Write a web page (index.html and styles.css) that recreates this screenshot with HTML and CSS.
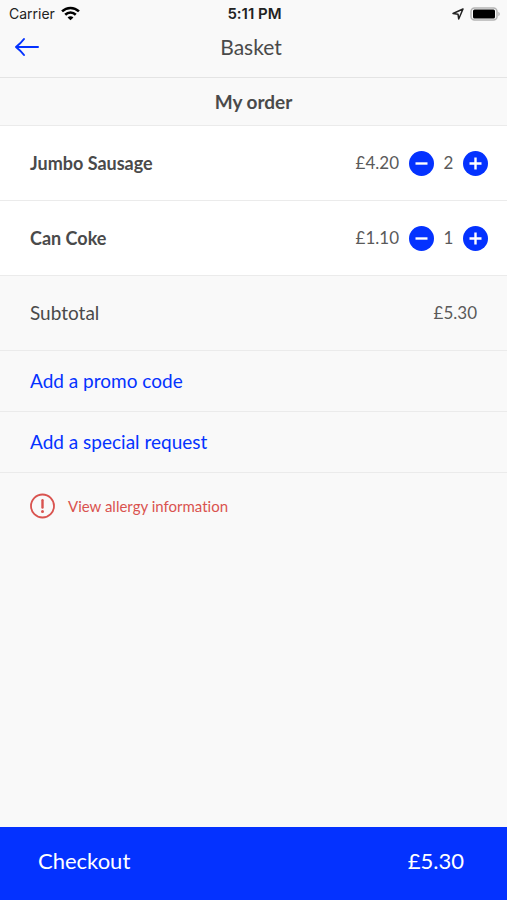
FILE: index.html
```html
<!DOCTYPE html>
<html lang="en">
<head>
<meta charset="UTF-8">
<meta name="viewport" content="width=device-width, initial-scale=1.0">
<title>Basket</title>

<link rel="stylesheet" href="styles.css">
</head>

<body>

<div class="status-bar">
<div class="status-left">
<span>Carrier</span>
<svg width="19" height="15" viewBox="0 0 18 14" fill="none" stroke="#000" stroke-width="2.4" aria-hidden="true">
<path d="M1 5C5.5 .6 12.5 .6 17 5"/>
<path d="M4 8.200C6.800 5.400 11.200 5.400 14 8.200"/>
<path d="M9 13.5L6.200 10.700C7.800 9.200 10.200 9.200 11.800 10.700Z" fill="#000" stroke="none"/>
</svg>
</div>
<span class="status-time">5:11 PM</span>
<div class="status-right">
<svg width="12" height="12" viewBox="0 0 12 12" fill="none" stroke="#222" stroke-width="1.5" stroke-linejoin="round" aria-hidden="true">
<path d="M11 1L1 5.5L6 6.2L6.700 11Z"/>
</svg>
<svg width="30" height="14" viewBox="0 0 30 14" aria-hidden="true">
<rect x="1" y="1" width="26" height="12" rx="3.5" fill="#f9f9f9" stroke="#b4b4b4" stroke-width="1.5"/>
<rect x="3" y="2.5" width="22" height="9" rx="1.5" fill="#000"/>
<path d="M28.3 4.800C30.3 5.600 30.3 8.400 28.3 9.200Z" fill="#b4b4b4"/>
</svg>
</div>
</div>

<header class="top-bar">
<button class="back" aria-label="Back">
<svg width="26" height="20" viewBox="0 0 26 20" fill="none" stroke="#0432ff" stroke-width="2" stroke-linecap="round" stroke-linejoin="round">
<path d="M24 10H2M10 2Q7 6 2 10Q7 14 10 18"/>
</svg>
</button>
<h1>Basket</h1>
</header>

<main>
<h2 class="section-title">My order</h2>

<ul class="items">
<li class="item">
<span class="item-name">Jumbo Sausage</span>
<span class="price">£4.20</span>
<button class="round" aria-label="Remove one Jumbo Sausage">
<svg width="25" height="25" viewBox="0 0 25 25" stroke="#fff" stroke-width="2.4"><path d="M6.5 12.5H18.5"/></svg>
</button>
<span class="qty">2</span>
<button class="round" aria-label="Add one Jumbo Sausage">
<svg width="25" height="25" viewBox="0 0 25 25" stroke="#fff" stroke-width="2.4"><path d="M6.5 12.5H18.5M12.5 6.5V18.5"/></svg>
</button>
</li>
<li class="item">
<span class="item-name">Can Coke</span>
<span class="price">£1.10</span>
<button class="round" aria-label="Remove one Can Coke">
<svg width="25" height="25" viewBox="0 0 25 25" stroke="#fff" stroke-width="2.4"><path d="M6.5 12.5H18.5"/></svg>
</button>
<span class="qty">1</span>
<button class="round" aria-label="Add one Can Coke">
<svg width="25" height="25" viewBox="0 0 25 25" stroke="#fff" stroke-width="2.4"><path d="M6.5 12.5H18.5M12.5 6.5V18.5"/></svg>
</button>
</li>
</ul>

<div class="subtotal">
<span>Subtotal</span>
<span class="price">£5.30</span>
</div>

<a class="link-row" href="#promo">Add a promo code</a>
<a class="link-row" href="#request">Add a special request</a>

<a class="allergy" href="#allergy">
<svg width="26" height="26" viewBox="0 0 26 26" fill="none" stroke="#d9534f" aria-hidden="true">
<circle cx="12.5" cy="13" r="11.5" stroke-width="1.8"/>
<path d="M12.5 7.2V14.5" stroke-width="2.4" stroke-linecap="round"/>
<circle cx="12.5" cy="18.5" r="1.5" fill="#d9534f" stroke="none"/>
</svg>
<span>View allergy information</span>
</a>
</main>

<button class="checkout">
<span>Checkout</span>
<span>£5.30</span>
</button>

</body>
</html>
```

FILE: styles.css
```css
*{
    box-sizing:border-box;
}

body{
    margin:0;
    min-height:100vh;
    display:flex;
    flex-direction:column;
    background:#f9f9f9;
    color:#4a4a4a;
    font-family:Lato, sans-serif;
    font-size:19px;
    line-height:24px;
    font-variant-ligatures:none;
}

button{
    border:none;
    padding:0;
    font:inherit;
    cursor:pointer;
}

a{
    text-decoration:none;
}

svg{
    display:block;
}

.status-bar{
    display:grid;
    grid-template-columns:1fr auto 1fr;
    align-items:center;
    height:27px;
    padding:0 7px 0 9px;
    color:#222;
    font-family:Inter, sans-serif;
    font-size:14px;
}

.status-left,
.status-right{
    display:flex;
    align-items:center;
    gap:6px;
}

.status-right{
    justify-content:flex-end;
}

.status-time{
    font-size:15px;
    font-weight:600;
}

.top-bar{
    display:grid;
    grid-template-columns:1fr auto 1fr;
    align-items:center;
    height:51px;
    padding:0 19px 10px 14px;
    border-bottom:1px solid #e4e4e4;
}

.top-bar h1{
    margin:0;
    font-size:21px;
    font-weight:400;
}

.back{
    justify-self:start;
    background:none;
}

.section-title{
    margin:0;
    padding:12px 12px 11px;
    border-bottom:1px solid #ebebeb;
    font-size:19px;
    font-weight:700;
    text-align:center;
}

.items{
    margin:0;
    padding:0;
    list-style:none;
    background:#fff;
}

.item{
    display:flex;
    align-items:center;
    height:75px;
    padding:0 19px 0 30px;
    border-bottom:1px solid #ebebeb;
}

.item-name{
    flex:1;
    font-size:18px;
    font-weight:700;
}

.price,
.qty{
    font-size:17px;
    color:#5a5a5a;
}

.item .price{
    margin-right:10px;
}

.qty{
    width:29px;
    text-align:center;
}

.round{
    width:25px;
    height:25px;
    border-radius:50%;
    background:#0432ff;
}

.subtotal{
    display:flex;
    justify-content:space-between;
    align-items:center;
    height:75px;
    padding:0 30px;
    border-bottom:1px solid #ebebeb;
}

.link-row{
    display:block;
    padding:18px 30px;
    border-bottom:1px solid #ebebeb;
    color:#0432ff;
}

.allergy{
    display:flex;
    align-items:center;
    gap:12px;
    padding:20px 30px;
    color:#d9534f;
    font-size:15px;
}

.checkout{
    display:flex;
    justify-content:space-between;
    margin-top:auto;
    padding:22px 43px 27px 38px;
    background:#0432ff;
    color:#fff;
    font-size:22px;
}
```
